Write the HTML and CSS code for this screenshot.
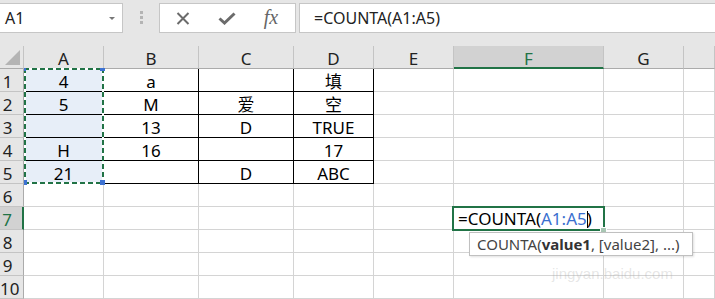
FILE: index.html
```html
<!DOCTYPE html>
<html>
<head>
    <meta charset="utf-8">
    <title>COUNTA</title>
    <link rel="stylesheet" href="styles.css">
</head>
<body>
    <div class="formula-bar">
        <div class="name-box">
            <span>A1</span>
            <span class="caret"></span>
        </div>
        <div class="grip"><i></i><i></i><i></i></div>
        <div class="fx-box">
            <span class="slot">
                <svg width="14" height="13" viewBox="0 0 14 13"><path d="M1.5 1 L12.5 12 M12.5 1 L1.5 12" stroke="#6b6b6b" stroke-width="2" fill="none"/></svg>
            </span>
            <span class="slot">
                <svg width="18" height="13" viewBox="0 0 18 13"><path d="M1.5 6.5 L6.5 11 L16.5 1.5" stroke="#6b6b6b" stroke-width="3" fill="none"/></svg>
            </span>
            <span class="slot fx">fx</span>
        </div>
        <div class="formula-input">=COUNTA(A1:A5)</div>
    </div>

    <div class="sheet">
        <div class="corner"><span class="tri"></span></div><div class="ch">A</div><div class="ch">B</div><div class="ch">C</div><div class="ch">D</div><div class="ch">E</div><div class="ch active">F</div><div class="ch">G</div><div class="ch"></div>

        <div class="rh">1</div><div class="c bd sel">4</div><div class="c bd">a</div><div class="c bd"></div><div class="c bd">填</div><div class="c"></div><div class="c"></div><div class="c"></div><div class="c"></div>
        <div class="rh">2</div><div class="c bd sel">5</div><div class="c bd">M</div><div class="c bd">爱</div><div class="c bd">空</div><div class="c"></div><div class="c"></div><div class="c"></div><div class="c"></div>
        <div class="rh">3</div><div class="c bd sel"></div><div class="c bd">13</div><div class="c bd">D</div><div class="c bd">TRUE</div><div class="c"></div><div class="c"></div><div class="c"></div><div class="c"></div>
        <div class="rh">4</div><div class="c bd sel">H</div><div class="c bd">16</div><div class="c bd"></div><div class="c bd">17</div><div class="c"></div><div class="c"></div><div class="c"></div><div class="c"></div>
        <div class="rh">5</div><div class="c bd sel">21</div><div class="c bd"></div><div class="c bd">D</div><div class="c bd">ABC</div><div class="c"></div><div class="c"></div><div class="c"></div><div class="c"></div>
        <div class="rh">6</div><div class="c"></div><div class="c"></div><div class="c"></div><div class="c"></div><div class="c"></div><div class="c"></div><div class="c"></div><div class="c"></div>
        <div class="rh active">7</div><div class="c"></div><div class="c"></div><div class="c"></div><div class="c"></div><div class="c"></div><div class="c"></div><div class="c"></div><div class="c"></div>
        <div class="rh">8</div><div class="c"></div><div class="c"></div><div class="c"></div><div class="c"></div><div class="c"></div><div class="c"></div><div class="c"></div><div class="c"></div>
        <div class="rh">9</div><div class="c"></div><div class="c"></div><div class="c"></div><div class="c"></div><div class="c"></div><div class="c"></div><div class="c"></div><div class="c"></div>
        <div class="rh">10</div><div class="c"></div><div class="c"></div><div class="c"></div><div class="c"></div><div class="c"></div><div class="c"></div><div class="c"></div><div class="c"></div>

        <!-- referenced range A1:A5 -->
        <div class="range">
            <span class="handle h-tl"></span>
            <span class="handle h-tr"></span>
            <span class="handle h-bl"></span>
            <span class="handle h-br"></span>
        </div>

        <!-- cell F7 in edit mode -->
        <div class="edit-cell">=COUNTA(<span class="ref">A1:A5</span><span class="cursor"></span>)</div>
        <div class="fill-handle"></div>

        <div class="tip">COUNTA(<b>value1</b>, [value2], ...)</div>

        <div class="wm-url">jingyan.baidu.com</div>
    </div>
</body>
</html>
```

FILE: styles.css
```css
body {
    margin: 0;
    font-family: "Noto Sans", "Noto Sans CJK SC", sans-serif;
    background: #e6e6e6;
    color: #000;
    overflow: hidden;
}

/* formula bar */
.formula-bar {
    display: flex;
    align-items: flex-start;
    height: 46px;
    padding-top: 3px;
    box-sizing: border-box;
}

.name-box {
    width: 124px;
    height: 30px;
    margin-left: -1px;
    background: white;
    border: 1px solid #c6c6c6;
    box-sizing: border-box;
    display: flex;
    align-items: center;
    justify-content: space-between;
    padding: 0 7px 0 5px;
    font-size: 16px;
    color: #222;
}

.caret {
    width: 0;
    height: 0;
    border-left: 3.5px solid transparent;
    border-right: 3.5px solid transparent;
    border-top: 3.5px solid #777;
}

.grip {
    width: 36px;
    height: 30px;
    display: flex;
    flex-direction: column;
    align-items: center;
    gap: 2px;
    padding-top: 8px;
    box-sizing: border-box;
}

.grip i {
    display: block;
    width: 3px;
    height: 3px;
    background: #b4b4b4;
}

.fx-box {
    width: 137px;
    height: 30px;
    background: white;
    border: 1px solid #c6c6c6;
    box-sizing: border-box;
    display: flex;
    align-items: center;
    padding-left: 1px;
}

.slot {
    width: 44px;
    display: flex;
    justify-content: center;
    align-items: center;
}

.fx {
    font-family: "Liberation Serif", serif;
    font-style: italic;
    font-size: 20px;
    color: #666;
    margin-top: -2px;
}

.formula-input {
    flex: 1;
    height: 30px;
    margin-left: 3px;
    background: white;
    border: 1px solid #c6c6c6;
    border-right: none;
    box-sizing: border-box;
    display: flex;
    align-items: center;
    padding-left: 14px;
    font-size: 16px;
    color: #222;
}

/* grid */
.sheet {
    position: relative;
    display: grid;
    grid-template-columns: 24px 80px 95px 95px 80px 80px 150px 80px 1fr;
    grid-auto-rows: 23px;
    background: white;
    font-size: 17px;
}

.c, .ch, .rh, .corner {
    box-sizing: border-box;
    border-right: 1px solid #d4d4d4;
    border-bottom: 1px solid #d4d4d4;
    line-height: 21px;
    padding-top: 2px;
    text-align: center;
    white-space: nowrap;
}

.ch, .corner {
    background: #e6e6e6;
    border-right-color: #c4c4c4;
    border-bottom-color: #ababab;
    color: #222;
}

.corner {
    position: relative;
}

.tri {
    position: absolute;
    left: 5px;
    top: 4px;
    width: 0;
    height: 0;
    border-left: 15px solid transparent;
    border-bottom: 15px solid #b4b4b4;
}

.rh {
    background: #e6e6e6;
    border-right-color: #ababab;
    border-bottom-color: #c4c4c4;
    color: #222;
    padding-right: 8px;
}

.ch.active {
    background: #d2d2d2;
    border-bottom: 2px solid #217346;
    color: #217346;
}

.rh.active {
    background: #d2d2d2;
    border-right: 2px solid #217346;
    color: #217346;
}

.c.bd {
    border-right-color: #000;
    border-bottom-color: #000;
}

.c.sel {
    background: #e7eef8;
}

/* overlays */
.range {
    position: absolute;
    left: 24px;
    top: 22px;
    width: 80px;
    height: 116px;
    background:
        repeating-linear-gradient(90deg, #217346 0 5px, #fff 5px 8px) top / 100% 2px no-repeat,
        repeating-linear-gradient(90deg, #217346 0 5px, #fff 5px 8px) bottom / 100% 2px no-repeat,
        repeating-linear-gradient(180deg, #217346 0 5px, #fff 5px 8px) left / 2px 100% no-repeat,
        repeating-linear-gradient(180deg, #217346 0 5px, #fff 5px 8px) right / 2px 100% no-repeat;
}

.handle {
    position: absolute;
    background: #3d72d2;
}

.h-tl { left: 0; top: 0; width: 2px; height: 3px; }
.h-tr { right: -1px; top: 0; width: 5px; height: 3px; }
.h-bl { left: 0; bottom: -1px; width: 3px; height: 5px; }
.h-br { right: -1px; bottom: -1px; width: 5px; height: 5px; }

.edit-cell {
    position: absolute;
    left: 452px;
    top: 160px;
    width: 153px;
    height: 25px;
    box-sizing: border-box;
    border: 2px solid #217346;
    background: white;
    padding-left: 4px;
    line-height: 18px;
    padding-top: 2px;
    white-space: nowrap;
}

.ref {
    color: #3a6fcf;
}

.cursor {
    display: inline-block;
    width: 1px;
    height: 17px;
    background: #000;
    vertical-align: -3px;
    margin-right: -1px;
}

.fill-handle {
    position: absolute;
    left: 600px;
    top: 181px;
    width: 5px;
    height: 5px;
    background: #a9c7b4;
    border: 1px solid white;
}

.tip {
    position: absolute;
    left: 469px;
    top: 186px;
    width: 224px;
    height: 24px;
    box-sizing: border-box;
    background: white;
    border: 1px solid #c0c0c0;
    box-shadow: 1px 1px 2px rgba(0,0,0,0.12);
    padding-left: 7px;
    font-size: 15px;
    line-height: 22px;
    color: #444;
    white-space: nowrap;
}

.tip b {
    color: #333;
}

.wm-url {
    position: absolute;
    left: 552px;
    top: 220px;
    font-family: "Liberation Sans", sans-serif;
    font-size: 15px;
    line-height: 16px;
    color: rgba(170, 170, 170, 0.3);
}
```
